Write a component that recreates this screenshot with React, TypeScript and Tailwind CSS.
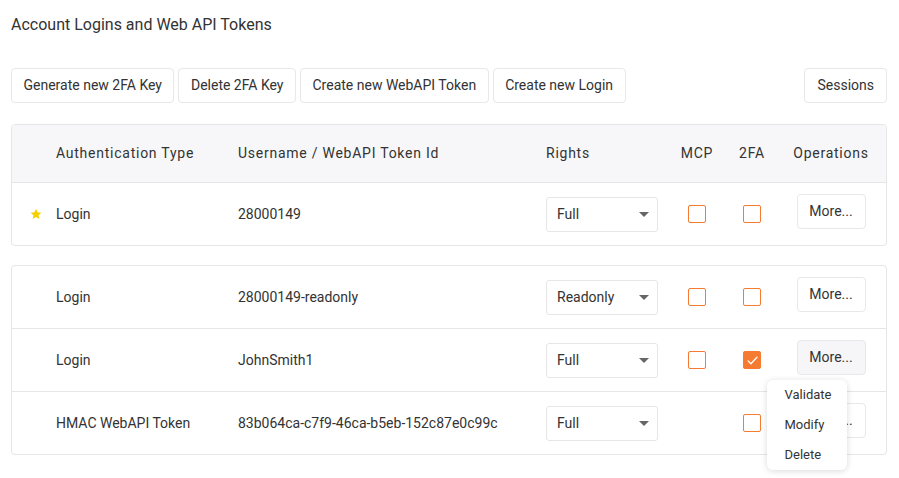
import React from 'react'

const font = { fontFamily: 'Roboto, "Noto Sans", sans-serif' }

const rows = [
  { type: 'Login', user: '28000149-readonly', rights: 'Readonly', mcp: true, mcpChecked: false, tfa: false },
  { type: 'Login', user: 'JohnSmith1', rights: 'Full', mcp: true, mcpChecked: false, tfa: true, open: true },
  { type: 'HMAC WebAPI Token', user: '83b064ca-c7f9-46ca-b5eb-152c87e0c99c', rights: 'Full', mcp: false, mcpChecked: false, tfa: false },
]

const cols = 'grid grid-cols-[44px_182px_308px_126px_50px_60px_98px] pr-[6px] items-center'

function Checkbox({ checked }: { checked: boolean }) {
  return (
    <span
      className={
        'inline-flex h-[18px] w-[18px] items-center justify-center rounded-[2px] border border-[#f47b30] ' +
        (checked ? 'bg-[#f47b30]' : 'bg-white')
      }
    >
      {checked && (
        <svg viewBox="0 0 16 16" className="h-[13px] w-[13px]" fill="none" stroke="white" strokeWidth="1.6">
          <path d="M2.5 8.5l3.5 3.5 7.5-8" strokeLinecap="round" strokeLinejoin="round" />
        </svg>
      )}
    </span>
  )
}

function Select({ value }: { value: string }) {
  return (
    <div className="flex h-[35px] w-[112px] items-center justify-between rounded-[3px] border border-[#e6e6e6] bg-white pl-[10px] pr-[8px] text-[14px] text-[#333]">
      <span>{value}</span>
      <svg viewBox="0 0 10 5" className="h-[5px] w-[10px]">
        <path d="M0 0h10L5 5z" fill="#666" />
      </svg>
    </div>
  )
}

function MoreButton({ hover }: { hover?: boolean }) {
  return (
    <button
      className={
        'mb-[6px] h-[35px] w-[69px] rounded-[4px] border border-[#e8e8e8] text-[14px] text-[#333] ' +
        (hover ? 'bg-[#f6f6f8]' : 'bg-white')
      }
    >
      More...
    </button>
  )
}

function Menu() {
  return (
    <div className="absolute left-[-30px] top-[40px] z-10 w-[80px] rounded-[6px] bg-white text-left shadow-[0_1px_6px_rgba(0,0,0,0.15)]">
      {['Validate', 'Modify', 'Delete'].map((m) => (
        <div key={m} className="flex h-[30px] items-center pl-[18px] text-[13px] text-[#333]">
          {m}
        </div>
      ))}
    </div>
  )
}

export default function App() {
  return (
    <div className="min-h-[478px] bg-white pl-[11px] pr-[12px] pt-[15px] text-[#333]" style={font}>
      <h1 className="h-[20px] text-[16px] leading-[20px] font-normal">Account Logins and Web API Tokens</h1>

      <div className="mt-[33px] flex gap-[4px]">
        {['Generate new 2FA Key', 'Delete 2FA Key', 'Create new WebAPI Token', 'Create new Login'].map((b) => (
          <button key={b} className="h-[35px] rounded-[4px] border border-[#e8e8e8] bg-white px-[11.5px] text-[14px] text-[#333]">
            {b}
          </button>
        ))}
        <button className="ml-auto h-[35px] rounded-[4px] border border-[#e8e8e8] bg-white px-[12px] text-[14px] text-[#333]">
          Sessions
        </button>
      </div>

      <div className="mt-[21px] overflow-hidden rounded-[4px] border border-[#e6e6e6]">
        <div className={cols + ' h-[58px] border-b border-[#e6e6e6] bg-[#f7f7f9] text-[14px] tracking-[0.75px]'}>
          <div />
          <div>Authentication Type</div>
          <div>Username / WebAPI Token Id</div>
          <div>Rights</div>
          <div className="text-center">MCP</div>
          <div className="text-center">2FA</div>
          <div className="text-center">Operations</div>
        </div>
        <div className={cols + ' h-[62px] text-[14px]'}>
          <div className="flex justify-end pr-[14px]">
            <svg viewBox="0 0 24 24" className="h-[12px] w-[12px]">
              <path d="M12 1.5l3.2 7 7.6.8-5.7 5.1 1.6 7.5L12 18l-6.7 3.9 1.6-7.5L1.2 9.3l7.6-.8z" fill="#f5d000" />
            </svg>
          </div>
          <div>Login</div>
          <div>28000149</div>
          <div>
            <Select value="Full" />
          </div>
          <div className="flex justify-center">
            <Checkbox checked={false} />
          </div>
          <div className="flex justify-center">
            <Checkbox checked={false} />
          </div>
          <div className="flex justify-center">
            <MoreButton />
          </div>
        </div>
      </div>

      <div className="mt-[19px] rounded-[4px] border border-[#e6e6e6]">
        {rows.map((r, i) => (
          <div
            key={r.user}
            className={cols + ' text-[14px] ' + (i < rows.length - 1 ? 'h-[63px] border-b border-[#e6e6e6]' : 'h-[62px]')}
          >
            <div />
            <div>{r.type}</div>
            <div>{r.user}</div>
            <div>
              <Select value={r.rights} />
            </div>
            <div className="flex justify-center">{r.mcp && <Checkbox checked={r.mcpChecked} />}</div>
            <div className="flex justify-center">
              <Checkbox checked={r.tfa} />
            </div>
            <div className="flex justify-center">
              <div className="relative">
                <MoreButton hover={r.open} />
                {r.open && <Menu />}
              </div>
            </div>
          </div>
        ))}
      </div>
    </div>
  )
}
